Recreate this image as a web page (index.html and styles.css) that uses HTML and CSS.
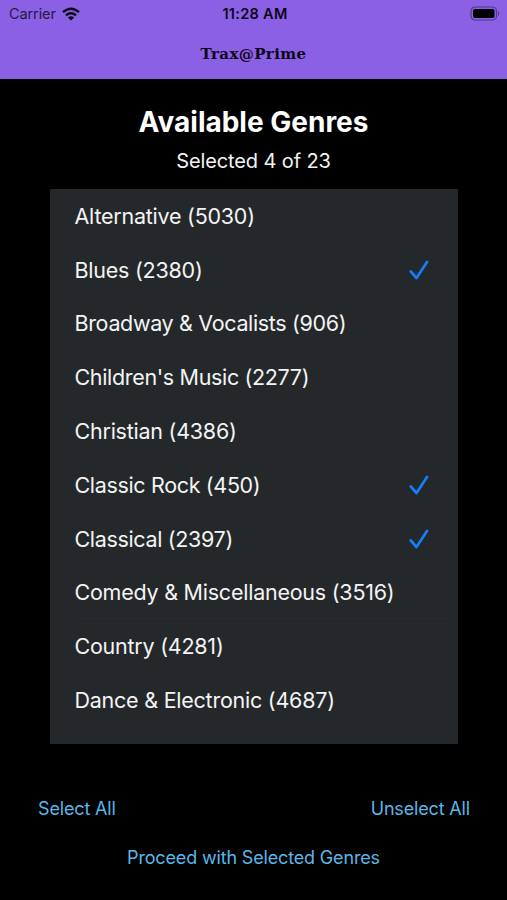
FILE: index.html
```html
<!DOCTYPE html>
<html lang="en">
<head>
<meta charset="utf-8">
<title>Trax@Prime</title>
<link rel="stylesheet" href="styles.css">
</head>
<body>
<header class="topbar">
  <div class="status">
    <div class="carrier"><span>Carrier</span>
      <svg class="wifi" viewBox="0 0 18 14"><g fill="none" stroke="#0b0714" stroke-width="2.4"><path d="M1 5.2Q9-1.8 17 5.2"/><path d="M3.9 8.3Q9 4 14.1 8.3"/></g><path d="M5.9 10.4Q9 8 12.1 10.4L9 13.6Z" fill="#0b0714"/></svg>
    </div>
    <div class="time">11:28 AM</div>
    <svg class="battery" viewBox="0 0 31 15"><rect x="1" y="1" width="25.5" height="13" rx="4" fill="none" stroke="#51378a" stroke-width="1.2"/><rect x="3" y="3" width="21.5" height="9" rx="2" fill="#000"/><path d="M28 5Q30.500 7.500 28 10Z" fill="#51378a"/></svg>
  </div>
  <div class="brand">Trax@Prime</div>
</header>
<main class="content">
  <h1 class="title">Available Genres</h1>
  <p class="count">Selected 4 of 23</p>
  <ul class="genres">
    <li class="genre"><span>Alternative (5030)</span></li>
    <li class="genre"><span>Blues (2380)</span><svg class="check" viewBox="0 0 20 20"><path d="M1.800 11.500L7.500 18L18 2"/></svg></li>
    <li class="genre tight"><span>Broadway &amp; Vocalists (906)</span></li>
    <li class="genre tight"><span>Children's Music (2277)</span></li>
    <li class="genre"><span>Christian (4386)</span></li>
    <li class="genre tight"><span>Classic Rock (450)</span><svg class="check" viewBox="0 0 20 20"><path d="M1.800 11.500L7.500 18L18 2"/></svg></li>
    <li class="genre tight"><span>Classical (2397)</span><svg class="check" viewBox="0 0 20 20"><path d="M1.800 11.500L7.500 18L18 2"/></svg></li>
    <li class="genre divided"><span>Comedy &amp; Miscellaneous (3516)</span></li>
    <li class="genre"><span>Country (4281)</span></li>
    <li class="genre"><span>Dance &amp; Electronic (4687)</span></li>
  </ul>
  <div class="actions"><a class="link">Select All</a><a class="link">Unselect All</a></div>
  <div class="proceed"><a class="link">Proceed with Selected Genres</a></div>
</main>
</body>
</html>
```
FILE: styles.css
```css
* { box-sizing: border-box; }
body { margin: 0; height: 900px; background: #000; color: #f3f4f5; font-family: Inter, "Liberation Sans", sans-serif; overflow: hidden; }
.topbar { height: 79px; background: #8b60e4; color: #0d0618; }
.status { display: grid; grid-template-columns: 1fr auto 1fr; align-items: center; height: 27px; padding: 0 6px 0 9px; }
.carrier { display: flex; align-items: center; gap: 6px; font-size: 14.5px; letter-spacing: -0.1px; color: #291846; }
.wifi { width: 18px; height: 14px; }
.time { font-size: 14.5px; font-weight: 600; letter-spacing: 0.3px; }
.battery { width: 31px; height: 15px; justify-self: end; }
.brand { height: 52px; line-height: 54px; text-align: center; font-family: "DejaVu Serif", serif; font-size: 15px; font-weight: 700; letter-spacing: 0.4px; }
.title { margin: 0; padding-top: 24px; line-height: 38px; font-size: 28px; font-weight: 700; text-align: center; color: #fff; }
.count { margin: 0; line-height: 40px; font-size: 20px; letter-spacing: -0.12px; text-align: center; }
.genres { list-style: none; margin: 8px 49px 0 50px; padding: 0; height: 554.5px; background: #25282a; }
.genre { display: flex; align-items: center; justify-content: space-between; height: 53.8px; padding: 0 29px 0 24.5px; font-size: 21.5px; letter-spacing: -0.24px; white-space: nowrap; }
.tight { letter-spacing: -0.34px; }
.divided { background: linear-gradient(#292c2e, #292c2e) 28px 100% / 370px 1px no-repeat; }
.check { width: 20px; height: 20px; fill: none; stroke: #147efb; stroke-width: 2.7; stroke-linecap: round; stroke-linejoin: round; }
.actions { display: flex; justify-content: space-between; margin-top: 53.5px; padding: 0 37px 0 38px; line-height: 24px; }
.proceed { margin-top: 25px; line-height: 24px; text-align: center; }
.link { color: #5bb7e8; font-size: 18px; letter-spacing: -0.16px; }
```
